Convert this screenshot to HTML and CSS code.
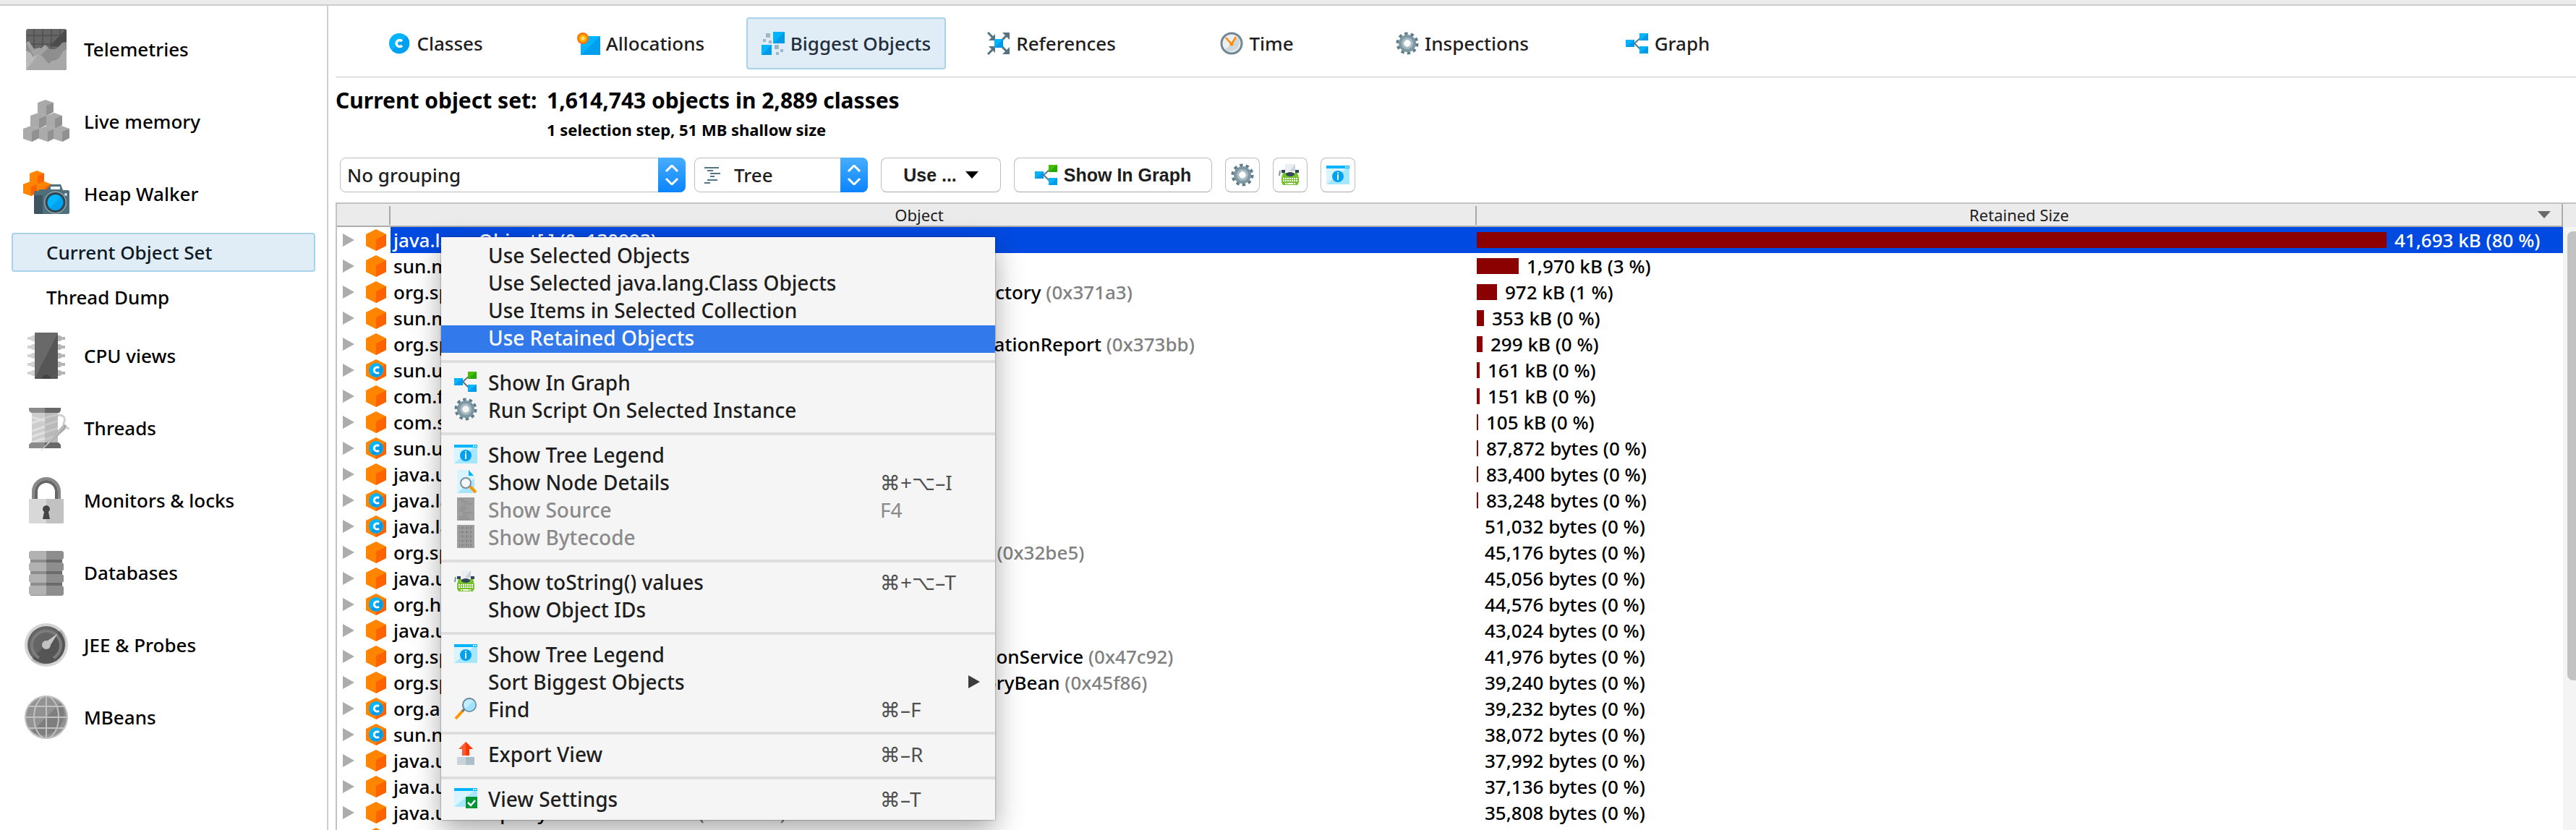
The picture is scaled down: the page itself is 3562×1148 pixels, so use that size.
FILE: index.html
```html
<!DOCTYPE html>
<html lang="en">
<head>
<meta charset="utf-8">
<title>Heap Walker - Biggest Objects</title>
<link rel="stylesheet" href="styles.css">
</head>
<body>
<svg class="sprite" aria-hidden="true">
  <symbol id="i-telemetry" viewBox="0 0 64 64">
    <clipPath id="tele-clip"><rect x="4" y="4" width="56" height="57" rx="3"/></clipPath>
    <g clip-path="url(#tele-clip)">
      <rect x="4" y="4" width="56" height="57" fill="#666"/>
      <path d="M60 4v24H36z" fill="#4a4a4a"/>
      <path d="M4 13h56M4 25h56M15 4v26M27 4v26M39 4v26M51 4v26" stroke="#505050" stroke-width="1.5"/>
      <path d="M4 23l4-2 7 11 7-2 3 1 5-5 7 6h7l5-3 5-6 6-1v39H4z" fill="#8e8e8e"/>
      <path d="M4 23l4-2 7 11 7-2 3 1 5-5 5 4-17 17z" fill="#a2a2a2"/>
      <path d="M4 34l6 3 4 6 7-4 6 3 8 10 5-4 5-1 5-3 5-9 5-3v31H4z" fill="#a8a8a8"/>
      <path d="M4 34l6 3 4 6 7-4-17 22z" fill="#bababa"/>
    </g>
  </symbol>
  <symbol id="i-cube" viewBox="0 0 22 22">
    <path d="M0 4L11 0l11 4v13l-10 5L0 18z" fill="currentColor"/>
    <path d="M12 8l10-4v13l-10 5z" fill="var(--shade)"/>
  </symbol>
  <symbol id="i-memory" viewBox="0 0 64 64">
    <g color="#aaaaaa" style="--shade:#919191">
      <use href="#i-cube" x="20" y="2" width="22" height="22"/>
      <use href="#i-cube" x="10" y="20" width="22" height="22"/>
      <use href="#i-cube" x="32" y="20" width="22" height="22"/>
      <use href="#i-cube" x="0" y="38" width="22" height="22"/>
      <use href="#i-cube" x="22" y="38" width="22" height="22"/>
      <use href="#i-cube" x="42" y="38" width="22" height="22"/>
    </g>
  </symbol>
  <symbol id="i-heap" viewBox="0 0 64 64">
    <g color="#ff8500" style="--shade:#ff6200">
      <use href="#i-cube" x="9" y="0" width="20" height="20"/>
      <use href="#i-cube" x="0" y="15" width="20" height="20"/>
      <use href="#i-cube" x="19" y="15" width="20" height="20"/>
    </g>
    <path d="M17 28h5v-2h10l4-4 2-3h14l3 8h7q2 0 2 2v29q0 2-2 2H17q-2 0-2-2V30q0-2 2-2z" fill="#4f6f7b"/>
    <path d="M15 34h12v26H17q-2 0-2-2z" fill="#3d5561"/>
    <rect x="38" y="22" width="13" height="4" fill="#eef3f5"/>
    <circle cx="44.500" cy="44" r="15.500" fill="#8ea3ab"/><circle cx="44.500" cy="44" r="14" fill="#33444e"/>
    <circle cx="44.500" cy="44" r="11" fill="#00a2f0"/><path d="M37 52a11 11 0 0 1 15-16z" fill="#00b7ff"/>
    <circle cx="59" cy="33" r="2" fill="#d3dde0"/>
  </symbol>
  <symbol id="i-cpu" viewBox="0 0 64 64">
    <g fill="#d2d2d2"><path id="pins" d="M6 6h4l3-2h3v8h-3l-3-2H6zM6 18h4l3-2h3v8h-3l-3-2H6zM6 30h4l3-2h3v8h-3l-3-2H6zM6 42h4l3-2h3v8h-3l-3-2H6zM6 54h4l3-2h3v8h-3l-3-2H6z"/></g>
    <path d="M58 6h-4l-3-2h-3v8h3l3-2h4zM58 18h-4l-3-2h-3v8h3l3-2h4zM58 30h-4l-3-2h-3v8h3l3-2h4zM58 42h-4l-3-2h-3v8h3l3-2h4zM58 54h-4l-3-2h-3v8h3l3-2h4z" fill="#b5b5b5"/>
    <rect x="16" width="32" height="64" rx="1" fill="#696969"/>
    <path d="M48 1v62l-1 1H17l-1-1z" fill="#565656"/>
    <path d="M26 64a6 6 0 0 1 12 0z" fill="#444"/>
  </symbol>
  <symbol id="i-thread" viewBox="0 0 64 64">
    <path d="M12 10h18v44H12z" fill="#cdcdcd"/><path d="M30 10h18v44H30z" fill="#b9b9b9"/>
    <path d="M12 17l18 5M12 25l18-6M12 36l18-6M12 44l18-6M12 52l18-6" stroke="#e0e0e0" stroke-width="3"/>
    <path d="M30 18l18-5M30 28l18-6M30 38l18-6M30 48l18-6" stroke="#c8c8c8" stroke-width="3"/>
    <path d="M8 4h22v7H11l-3-3zM8 60h22v-8H11l-3 3z" fill="#8b8b8b"/>
    <path d="M30 4h22v4l-2 3H30zM30 60h22v-5l-3-3H30z" fill="#686868"/>
    <path d="M48 14c7 0 11 3 9 9-2 4-2 7 7 10" fill="none" stroke="#d0d0d0" stroke-width="3"/>
    <path d="M24 64l30-35q6-4 6 1l-2 4z" fill="#aaa"/><path d="M24 64l32-34" stroke="#ddd"/>
  </symbol>
  <symbol id="i-lock" viewBox="0 0 64 64">
    <path d="M14 31V20a18 18 0 0 1 36 0v11" fill="none" stroke="#888" stroke-width="4"/>
    <path d="M18 31V20a14 14 0 0 1 28 0v11" fill="none" stroke="#666" stroke-width="4"/>
    <rect x="8" y="30" width="48" height="34" rx="1" fill="#d8d8d8"/>
    <path d="M32 30h23l1 1v32l-1 1H32z" fill="#c2c2c2"/>
    <path d="M27 58l2-10a5 5 0 1 1 6 0l2 10z" fill="#454545"/>
  </symbol>
  <symbol id="i-db" viewBox="0 0 64 64">
    <path d="M10 4h22v60H10z" fill="#8d8d8d"/><path d="M32 4h22v60H32z" fill="#6b6b6b"/>
    <g fill="#b2b2b2"><path d="M10 2h22v12H10l-2-2V4zM10 18h22v12H10l-2-2v-8zM10 34h22v12H10l-2-2v-8zM10 50h22v13H10l-2-2v-9z"/></g>
    <g fill="#8e8e8e"><path d="M32 2h22l2 2v8l-2 2H32zM32 18h22l2 2v8l-2 2H32zM32 34h22l2 2v8l-2 2H32zM32 50h22l2 2v10l-2 2H32z"/></g>
  </symbol>
  <symbol id="i-gauge" viewBox="0 0 64 64">
    <circle cx="32" cy="32" r="30" fill="#d4d4d4"/><path d="M53 11A30 30 0 0 1 11 53z" fill="#b5b5b5"/>
    <circle cx="32" cy="32" r="26" fill="#656565"/><path d="M50 13A26 26 0 0 1 13 50z" fill="#555"/>
    <path d="M22 50A20 20 0 1 1 42 50" fill="none" stroke="#7c7c7c" stroke-width="4"/>
    <path d="M48 16L36 35l-6-6z" fill="#c6c6c6"/><circle cx="32" cy="32" r="6" fill="#c2c2c2"/>
  </symbol>
  <symbol id="i-globe" viewBox="0 0 64 64">
    <circle cx="32" cy="32" r="29" fill="#929292"/><path d="M52 12A29 29 0 0 1 12 52z" fill="#7e7e7e"/>
    <g fill="none" stroke="#c0c0c0" stroke-width="2"><circle cx="32" cy="32" r="29"/><ellipse cx="32" cy="32" rx="17" ry="29"/><path d="M32 3v58M3 32h58M7 17h50M7 47h50"/></g>
  </symbol>

  <symbol id="i-class" viewBox="0 0 32 32">
    <circle cx="16" cy="16" r="14" fill="#00b4ff"/><path d="M26 6A14 14 0 0 1 6 26z" fill="#00a0f0"/>
    <path d="M20 13a4.500 4.500 0 1 0 0 6" fill="none" stroke="#fff" stroke-width="3.500"/>
  </symbol>
  <symbol id="i-alloc" viewBox="0 0 32 32">
    <path d="M5 6h27v26H5z" fill="#00b4ff"/><path d="M32 6v26H5z" fill="#009fee"/>
    <circle cx="8" cy="9" r="8" fill="#ff7200"/><circle cx="8" cy="9" r="5.500" fill="#ffb300"/><circle cx="8" cy="9" r="2.500" fill="#ffe17a"/>
  </symbol>
  <symbol id="i-biggest" viewBox="0 0 32 32">
    <path d="M16 0h16v16H16zM0 18h14v14H0z" fill="#00b4ff"/><path d="M32 0v16H16zM14 18v14H0z" fill="#009ae8"/>
    <path d="M6 2h6v6H6zM2 10h4v4H2zM10 12h4v4h-4zM18 18h6v6h-6zM26 24h4v4h-4zM20 28h4v4h-4z" fill="#9fb7c4"/>
  </symbol>
  <symbol id="i-refs" viewBox="0 0 32 32">
    <g fill="none" stroke="#54737f" stroke-width="3"><path d="M1 1l7 7M1 31l7-7M20 12l7-7M20 20l7 7"/></g>
    <path d="M11 3v9H2zM11 29v-9H2zM21 1h10v10zM21 31h10V21z" fill="#54737f"/>
    <path d="M10 10h12v12H10z" fill="#00b4ff"/><path d="M22 10v12H10z" fill="#009ae8"/>
  </symbol>
  <symbol id="i-clock" viewBox="0 0 32 32">
    <circle cx="16" cy="16" r="14" fill="#eceff1" stroke="#6f8894" stroke-width="3"/><path d="M25 7A13 13 0 0 1 7 25z" fill="#cdd7dc"/>
    <path d="M8 8l8 9 6-10" fill="none" stroke="#ff8a00" stroke-width="2.500"/><circle cx="16" cy="17" r="2.500" fill="#ff8a00"/>
  </symbol>
  <symbol id="i-gear" viewBox="0 0 32 32">
    <circle cx="16" cy="16" r="13" fill="none" stroke="#5e7c8a" stroke-width="5" stroke-dasharray="4.200 3.970"/>
    <circle cx="16" cy="16" r="8.500" fill="none" stroke="#7d97a3" stroke-width="7"/>
    <circle cx="16" cy="16" r="6.500" fill="none" stroke="#a9bbc3" stroke-width="3"/>
  </symbol>
  <symbol id="i-graph" viewBox="0 0 32 32">
    <path d="M22 7L12 16l10 10" fill="none" stroke="#5b7685" stroke-width="2"/>
    <path d="M0 11h12v10H0zM19 20h12v10H19z" fill="#00b4ff"/><path d="M12 11v10H0zM31 20v10H19z" fill="#009ae8"/>
    <path d="M19 2h12v10H19z" fill="var(--node, #00b4ff)"/><path d="M31 2v10H19z" fill="var(--node-dark, #009ae8)"/>
  </symbol>
  <symbol id="i-tree" viewBox="0 0 22 24">
    <path d="M0 1h20M4 5h8M8 9h14M8 13h6M4 18h14M0 22h8" stroke="#557484" stroke-width="2"/>
  </symbol>
  <symbol id="i-typewriter" viewBox="0 0 32 32">
    <path d="M9 1h14l0 10H9z" fill="#eceff1"/><path d="M23 1v10h-8z" fill="#c9d2d8"/>
    <path d="M4 9h5v4H4zM23 9h5v4h-5z" fill="#33475b"/><path d="M2 10l-1 7" stroke="#7c96a2" stroke-width="2"/>
    <path d="M6 13h20l2 7v6l-2 4H6l-2-4v-6z" fill="#76c22d"/>
    <ellipse cx="16" cy="15" rx="6" ry="3" fill="#33475b"/>
    <path d="M6 21h20M6 24h20" stroke="#fff" stroke-width="2" stroke-dasharray="2 1"/><path d="M9 28h2M12 28h8M21 28h2" stroke="#fff" stroke-width="2"/>
  </symbol>
  <symbol id="i-legend" viewBox="0 0 32 32">
    <path d="M0 3h32v26H0z" fill="#a6e6ff"/><path d="M0 3h32L0 29z" fill="#d8f4ff"/><path d="M0 3h32v4H0z" fill="#00b4ff"/>
    <path d="M26 4h2v2h-2zM29 4h2v2h-2z" fill="#d8f4ff"/>
    <circle cx="16" cy="18" r="8" fill="#00a2f0"/><path d="M15 12h2v2h-2zM15 15h2v8h-2z" fill="#fff"/>
  </symbol>
  <symbol id="i-details" viewBox="0 0 32 32">
    <path d="M4 0h16l8 8v24H4z" fill="#d8f4ff"/><path d="M28 12v20H4z" fill="#a6e6ff"/><path d="M20 0v8h7z" fill="#00b4ff"/>
    <path d="M22 23l8 8" stroke="#ff9500" stroke-width="4"/>
    <circle cx="16" cy="18" r="7" fill="#f4f6f7" stroke="#7f8f98" stroke-width="2"/>
  </symbol>
  <symbol id="i-source" viewBox="0 0 32 32">
    <path d="M4 0h24v32H4z" fill="#9e9e9e"/>
    <path d="M7 3h8M10 6h10M14 9h11M10 12h6M7 15h12M7 18h8M12 21h13M12 24h8M7 27h12M7 30h14" stroke="#868686"/>
  </symbol>
  <symbol id="i-bytecode" viewBox="0 0 32 32">
    <path d="M4 0h24v32H4z" fill="#9e9e9e"/>
    <path d="M7 4h18M7 10h18M7 16h18M7 22h18M7 28h18" stroke="#868686" stroke-width="4" stroke-dasharray="1 2 2 1"/>
  </symbol>
  <symbol id="i-find" viewBox="0 0 32 32">
    <path d="M2 30l11-12" stroke="#ff9500" stroke-width="4"/><path d="M11 20l4-4" stroke="#5f7d8c" stroke-width="3"/>
    <circle cx="21" cy="11" r="9" fill="#bfeeff" stroke="#66839a" stroke-width="2"/><path d="M27 5a8 8 0 0 1-12 12z" fill="#a0e2fb"/>
  </symbol>
  <symbol id="i-export" viewBox="0 0 32 32">
    <path d="M16 0l10 10h-5v9H11v-9H6z" fill="#ff5a30"/><path d="M16 0l10 10h-5v9h-5z" fill="#ff3700"/>
    <path d="M4 21h12v11H4z" fill="#c8d4d9"/><path d="M16 21h12v11H16z" fill="#abbfc6"/>
  </symbol>
  <symbol id="i-settings" viewBox="0 0 32 32">
    <path d="M0 2h32v26H0z" fill="#a6e6ff"/><path d="M0 2h32L0 28z" fill="#d8f4ff"/><path d="M0 2h32v4H0z" fill="#00b4ff"/>
    <path d="M26 3h2v2h-2zM29 3h2v2h-2z" fill="#d8f4ff"/>
    <path d="M16 14h16v16H16z" fill="#009636"/><path d="M19 22l4 4 6-7" fill="none" stroke="#fff" stroke-width="2.500"/>
  </symbol>
  <symbol id="i-obj" viewBox="0 0 28 30">
    <path d="M14 0l14 7v16l-14 7L0 23V7z" fill="#ff8500"/><path d="M28 7v16l-14 7V14z" fill="#ff6200"/>
  </symbol>
  <symbol id="i-cls" viewBox="0 0 28 30">
    <path d="M14 0l14 7v16l-14 7L0 23V7z" fill="#ff8500"/><path d="M28 7v16l-14 7V14z" fill="#ff6200"/>
    <circle cx="14" cy="15" r="10" fill="#00b4ff"/><path d="M21 8A10 10 0 0 1 7 22z" fill="#009ae8"/>
    <path d="M18 12a4 4 0 1 0 0 6" fill="none" stroke="#fff" stroke-width="3"/>
  </symbol>
  <symbol id="i-tri" viewBox="0 0 16 18"><path d="M0 0l16 9-16 9z" fill="currentColor"/></symbol>
  <symbol id="i-updown" viewBox="0 0 20 28"><path d="M2 9l8-8 8 8M2 19l8 8 8-8" fill="none" stroke="#fff" stroke-width="3"/></symbol>
  <symbol id="i-down" viewBox="0 0 18 10"><path d="M0 0h18l-9 10z" fill="currentColor"/></symbol>
</svg>

<div class="window">
  <div class="strip"></div>
  <div class="body">
    <nav class="sidebar">
      <a class="side-item" href="#"><svg class="side-icon"><use href="#i-telemetry"/></svg>Telemetries</a>
      <a class="side-item" href="#"><svg class="side-icon"><use href="#i-memory"/></svg>Live memory</a>
      <a class="side-item" href="#"><svg class="side-icon"><use href="#i-heap"/></svg>Heap Walker</a>
      <a class="side-sub is-active" href="#">Current Object Set</a>
      <a class="side-sub" href="#">Thread Dump</a>
      <a class="side-item" href="#"><svg class="side-icon"><use href="#i-cpu"/></svg>CPU views</a>
      <a class="side-item" href="#"><svg class="side-icon"><use href="#i-thread"/></svg>Threads</a>
      <a class="side-item" href="#"><svg class="side-icon"><use href="#i-lock"/></svg>Monitors &amp; locks</a>
      <a class="side-item" href="#"><svg class="side-icon"><use href="#i-db"/></svg>Databases</a>
      <a class="side-item" href="#"><svg class="side-icon"><use href="#i-gauge"/></svg>JEE &amp; Probes</a>
      <a class="side-item" href="#"><svg class="side-icon"><use href="#i-globe"/></svg>MBeans</a>
    </nav>

    <main class="main">
      <div class="tabs">
        <button class="tab"><svg class="icon"><use href="#i-class"/></svg>Classes</button>
        <button class="tab"><svg class="icon"><use href="#i-alloc"/></svg>Allocations</button>
        <button class="tab is-active"><svg class="icon"><use href="#i-biggest"/></svg>Biggest Objects</button>
        <button class="tab"><svg class="icon"><use href="#i-refs"/></svg>References</button>
        <button class="tab"><svg class="icon"><use href="#i-clock"/></svg>Time</button>
        <button class="tab"><svg class="icon"><use href="#i-gear"/></svg>Inspections</button>
        <button class="tab"><svg class="icon"><use href="#i-graph"/></svg>Graph</button>
      </div>

      <dl class="summary">
        <dt>Current object set:</dt>
        <dd>1,614,743 objects in 2,889 classes</dd>
        <dd class="summary-note">1 selection step, 51 MB shallow size</dd>
      </dl>

      <div class="toolbar">
        <div class="selects">
          <div class="combo combo-wide">
            <select aria-label="Grouping"><option>No grouping</option></select>
            <span class="combo-cap"><svg class="updown"><use href="#i-updown"/></svg></span>
          </div>
          <div class="combo combo-icon">
            <select aria-label="View mode"><option>Tree</option></select>
            <svg class="combo-glyph"><use href="#i-tree"/></svg>
            <span class="combo-cap"><svg class="updown"><use href="#i-updown"/></svg></span>
          </div>
        </div>
        <button class="btn btn-use">Use ...<svg class="down"><use href="#i-down"/></svg></button>
        <button class="btn btn-graph"><svg class="icon green"><use href="#i-graph"/></svg>Show In Graph</button>
        <button class="btn btn-square" aria-label="Run script"><svg class="icon"><use href="#i-gear"/></svg></button>
        <button class="btn btn-square" aria-label="Show toString() values"><svg class="icon"><use href="#i-typewriter"/></svg></button>
        <button class="btn btn-square" aria-label="Show tree legend"><svg class="icon"><use href="#i-legend"/></svg></button>
      </div>

      <div class="grid-area">
        <div class="grid-scroll">
        <table class="grid">
          <thead>
            <tr><th class="col-tree"></th><th class="col-object">Object</th><th class="col-size"><div class="th-size"><span>Retained Size</span><svg class="down"><use href="#i-down"/></svg></div></th></tr>
          </thead>
          <tbody>
            <tr class="is-selected"><td><div class="node"><svg class="tri"><use href="#i-tri"/></svg><svg class="hex"><use href="#i-obj"/></svg></div></td><td>java.lang.Object[ ] <span class="id">(0x130993)</span></td><td><div class="size"><i style="width:1258px"></i>41,693 kB (80 %)</div></td></tr>
            <tr><td><div class="node"><svg class="tri"><use href="#i-tri"/></svg><svg class="hex"><use href="#i-obj"/></svg></div></td><td>sun.misc.URLClassPath</td><td><div class="size"><i style="width:58px"></i>1,970 kB (3 %)</div></td></tr>
            <tr><td><div class="node"><svg class="tri"><use href="#i-tri"/></svg><svg class="hex"><use href="#i-obj"/></svg></div></td><td>org.springframework.beans.factory.support.DefaultListableBeanFactory <span class="id">(0x371a3)</span></td><td><div class="size"><i style="width:28px"></i>972 kB (1 %)</div></td></tr>
            <tr><td><div class="node"><svg class="tri"><use href="#i-tri"/></svg><svg class="hex"><use href="#i-obj"/></svg></div></td><td>sun.misc.Launcher</td><td><div class="size"><i style="width:10px"></i>353 kB (0 %)</div></td></tr>
            <tr><td><div class="node"><svg class="tri"><use href="#i-tri"/></svg><svg class="hex"><use href="#i-obj"/></svg></div></td><td>org.springframework.boot.autoconfigure.condition.ConditionEvaluationReport <span class="id">(0x373bb)</span></td><td><div class="size"><i style="width:8px"></i>299 kB (0 %)</div></td></tr>
            <tr><td><div class="node"><svg class="tri"><use href="#i-tri"/></svg><svg class="hex"><use href="#i-cls"/></svg></div></td><td>sun.util.calendar.ZoneInfo</td><td><div class="size"><i style="width:4px"></i>161 kB (0 %)</div></td></tr>
            <tr><td><div class="node"><svg class="tri"><use href="#i-tri"/></svg><svg class="hex"><use href="#i-obj"/></svg></div></td><td>com.fasterxml.jackson</td><td><div class="size"><i style="width:4px"></i>151 kB (0 %)</div></td></tr>
            <tr><td><div class="node"><svg class="tri"><use href="#i-tri"/></svg><svg class="hex"><use href="#i-obj"/></svg></div></td><td>com.sun.jmx.mbeanserver</td><td><div class="size"><i style="width:2px"></i>105 kB (0 %)</div></td></tr>
            <tr><td><div class="node"><svg class="tri"><use href="#i-tri"/></svg><svg class="hex"><use href="#i-cls"/></svg></div></td><td>sun.util.locale</td><td><div class="size"><i style="width:2px"></i>87,872 bytes (0 %)</div></td></tr>
            <tr><td><div class="node"><svg class="tri"><use href="#i-tri"/></svg><svg class="hex"><use href="#i-obj"/></svg></div></td><td>java.util.HashMap</td><td><div class="size"><i style="width:2px"></i>83,400 bytes (0 %)</div></td></tr>
            <tr><td><div class="node"><svg class="tri"><use href="#i-tri"/></svg><svg class="hex"><use href="#i-cls"/></svg></div></td><td>java.lang.Character</td><td><div class="size"><i style="width:2px"></i>83,248 bytes (0 %)</div></td></tr>
            <tr><td><div class="node"><svg class="tri"><use href="#i-tri"/></svg><svg class="hex"><use href="#i-cls"/></svg></div></td><td>java.lang.Integer</td><td><div class="size"><i style="width:0px"></i>51,032 bytes (0 %)</div></td></tr>
            <tr><td><div class="node"><svg class="tri"><use href="#i-tri"/></svg><svg class="hex"><use href="#i-obj"/></svg></div></td><td>org.springframework.util.ConcurrentReferenceHashMap$Segment <span class="id">(0x32be5)</span></td><td><div class="size"><i style="width:0px"></i>45,176 bytes (0 %)</div></td></tr>
            <tr><td><div class="node"><svg class="tri"><use href="#i-tri"/></svg><svg class="hex"><use href="#i-obj"/></svg></div></td><td>java.util.HashMap</td><td><div class="size"><i style="width:0px"></i>45,056 bytes (0 %)</div></td></tr>
            <tr><td><div class="node"><svg class="tri"><use href="#i-tri"/></svg><svg class="hex"><use href="#i-cls"/></svg></div></td><td>org.hibernate.cfg</td><td><div class="size"><i style="width:0px"></i>44,576 bytes (0 %)</div></td></tr>
            <tr><td><div class="node"><svg class="tri"><use href="#i-tri"/></svg><svg class="hex"><use href="#i-obj"/></svg></div></td><td>java.util.HashMap</td><td><div class="size"><i style="width:0px"></i>43,024 bytes (0 %)</div></td></tr>
            <tr><td><div class="node"><svg class="tri"><use href="#i-tri"/></svg><svg class="hex"><use href="#i-obj"/></svg></div></td><td>org.springframework.boot.autoconfigure.web.format.WebConversionService <span class="id">(0x47c92)</span></td><td><div class="size"><i style="width:0px"></i>41,976 bytes (0 %)</div></td></tr>
            <tr><td><div class="node"><svg class="tri"><use href="#i-tri"/></svg><svg class="hex"><use href="#i-obj"/></svg></div></td><td>org.springframework.cache.jpa.LocalContainerEntityManagerFactoryBean <span class="id">(0x45f86)</span></td><td><div class="size"><i style="width:0px"></i>39,240 bytes (0 %)</div></td></tr>
            <tr><td><div class="node"><svg class="tri"><use href="#i-tri"/></svg><svg class="hex"><use href="#i-cls"/></svg></div></td><td>org.apache.catalina</td><td><div class="size"><i style="width:0px"></i>39,232 bytes (0 %)</div></td></tr>
            <tr><td><div class="node"><svg class="tri"><use href="#i-tri"/></svg><svg class="hex"><use href="#i-cls"/></svg></div></td><td>sun.nio.cs.ext</td><td><div class="size"><i style="width:0px"></i>38,072 bytes (0 %)</div></td></tr>
            <tr><td><div class="node"><svg class="tri"><use href="#i-tri"/></svg><svg class="hex"><use href="#i-obj"/></svg></div></td><td>java.util.HashMap</td><td><div class="size"><i style="width:0px"></i>37,992 bytes (0 %)</div></td></tr>
            <tr><td><div class="node"><svg class="tri"><use href="#i-tri"/></svg><svg class="hex"><use href="#i-obj"/></svg></div></td><td>java.util.HashMap</td><td><div class="size"><i style="width:0px"></i>37,136 bytes (0 %)</div></td></tr>
            <tr><td><div class="node"><svg class="tri"><use href="#i-tri"/></svg><svg class="hex"><use href="#i-obj"/></svg></div></td><td>java.util.PropertyResourceBundle <span class="id">(0x2ab7e)</span></td><td><div class="size"><i style="width:0px"></i>35,808 bytes (0 %)</div></td></tr>
            <tr><td><div class="node"><svg class="tri"><use href="#i-tri"/></svg><svg class="hex"><use href="#i-obj"/></svg></div></td><td></td><td></td></tr>
          </tbody>
        </table>
        </div>
        <div class="scroll-col"><div class="scroll-head"></div><div class="scroll-track"><div class="scroll-thumb"></div></div></div>
      </div>
    </main>
  </div>
</div>

<div class="menu" role="menu">
  <button role="menuitem"><span></span><span>Use Selected Objects</span></button>
  <button role="menuitem"><span></span><span>Use Selected java.lang.Class Objects</span></button>
  <button role="menuitem"><span></span><span>Use Items in Selected Collection</span></button>
  <button role="menuitem" class="is-hover"><span></span><span>Use Retained Objects</span></button>
  <hr>
  <button role="menuitem"><svg class="icon green"><use href="#i-graph"/></svg><span>Show In Graph</span></button>
  <button role="menuitem"><svg class="icon"><use href="#i-gear"/></svg><span>Run Script On Selected Instance</span></button>
  <hr>
  <button role="menuitem"><svg class="icon"><use href="#i-legend"/></svg><span>Show Tree Legend</span></button>
  <button role="menuitem"><svg class="icon"><use href="#i-details"/></svg><span>Show Node Details</span><kbd>⌘+⌥–I</kbd></button>
  <button role="menuitem" disabled><svg class="icon"><use href="#i-source"/></svg><span>Show Source</span><kbd>F4</kbd></button>
  <button role="menuitem" disabled><svg class="icon"><use href="#i-bytecode"/></svg><span>Show Bytecode</span></button>
  <hr>
  <button role="menuitem"><svg class="icon"><use href="#i-typewriter"/></svg><span>Show toString() values</span><kbd>⌘+⌥–T</kbd></button>
  <button role="menuitem"><span></span><span>Show Object IDs</span></button>
  <hr>
  <button role="menuitem"><svg class="icon"><use href="#i-legend"/></svg><span>Show Tree Legend</span></button>
  <button role="menuitem"><span></span><span>Sort Biggest Objects</span><svg class="submenu"><use href="#i-tri"/></svg></button>
  <button role="menuitem"><svg class="icon"><use href="#i-find"/></svg><span>Find</span><kbd>⌘–F</kbd></button>
  <hr>
  <button role="menuitem"><svg class="icon"><use href="#i-export"/></svg><span>Export View</span><kbd>⌘–R</kbd></button>
  <hr>
  <button role="menuitem"><svg class="icon"><use href="#i-settings"/></svg><span>View Settings</span><kbd>⌘–T</kbd></button>
</div>
</body>
</html>
```
FILE: styles.css
```css
* { box-sizing: border-box; }

body {
  margin: 0;
  background: #fff;
  color: #000;
  font: 500 26px/36px "Noto Sans", "Open Sans", "DejaVu Sans", sans-serif;
}

button, select { font: inherit; color: inherit; }
a { color: inherit; text-decoration: none; }
svg { display: block; flex: none; }
.sprite { position: absolute; width: 0; height: 0; }

.window {
  display: flex;
  flex-direction: column;
  height: 100vh;
  overflow: hidden;
}

.strip {
  flex: none;
  height: 8px;
  background: #ececec;
  border-bottom: 2px solid #cdcdcd;
}

.body { display: flex; flex: 1; min-height: 0; }

/* Sidebar */
.sidebar {
  flex: none;
  width: 454px;
  padding-top: 10px;
  border-right: 2px solid #cfcfcf;
}

.side-item {
  display: flex;
  align-items: center;
  gap: 20px;
  height: 100px;
  padding-left: 32px;
}

.side-icon { width: 64px; height: 64px; }

.side-sub {
  display: flex;
  align-items: center;
  height: 54px;
  margin: 4px 16px 8px;
  padding-left: 46px;
  border: 2px solid transparent;
  border-radius: 4px;
}

.side-sub + .side-sub { margin-bottom: 4px; }

.side-sub.is-active {
  background: #e0ecf6;
  border-color: #a9d3e9;
  color: #0e1b26;
}

/* Main column */
.main {
  display: flex;
  flex: 1;
  flex-direction: column;
  min-width: 0;
  padding-left: 10px;
}

.tabs {
  display: flex;
  gap: 8px;
  padding: 16px 0 10px;
  border-bottom: 1px solid #c8c8c8;
  color: #1e1e1e;
}

.tab {
  display: flex;
  align-items: center;
  justify-content: center;
  gap: 8px;
  width: 276px;
  height: 72px;
  padding: 0;
  background: none;
  border: 2px solid transparent;
  border-radius: 4px;
}

.tab.is-active {
  background: #e0ecf6;
  border-color: #a9d3e9;
  color: #1f2e3a;
}

.icon { width: 32px; height: 32px; }
.green { --node: #45be00; --node-dark: #2ba800; }

.summary {
  display: grid;
  grid-template-columns: 292px 1fr;
  margin: 12px 0 19px;
  font-size: 30px;
  font-weight: 700;
  line-height: 40px;
}

.summary dd { margin: 0; }
.summary .summary-note { grid-column: 2; font-size: 22px; }

/* Toolbar */
.toolbar {
  display: flex;
  gap: 18px;
  padding: 0 0 14px 6px;
  color: #1e1e1e;
}

.selects { display: flex; gap: 12px; }

.combo { position: relative; width: 240px; height: 48px; }
.combo-wide { width: 478px; }

.combo select {
  width: 100%;
  height: 100%;
  padding: 0 40px 0 9px;
  appearance: none;
  background: #fff;
  border: 1px solid #bdbdbd;
  border-radius: 8px;
}

.combo-icon select { padding-left: 54px; }

.combo-glyph {
  position: absolute;
  top: 13px;
  left: 14px;
  width: 22px;
  height: 24px;
}

.combo-cap {
  position: absolute;
  top: 0;
  right: 0;
  bottom: 0;
  display: grid;
  place-items: center;
  width: 38px;
  border-radius: 0 8px 8px 0;
  background: linear-gradient(#47adff, #0a84ff);
  pointer-events: none;
}

.updown { width: 20px; height: 28px; }

.btn {
  display: flex;
  align-items: center;
  justify-content: center;
  height: 48px;
  padding: 0;
  background: #fff;
  border: 1px solid #bdbdbd;
  border-bottom-color: #a8a8a8;
  border-radius: 8px;
  font-family: "Liberation Sans", Arial, sans-serif;
  font-size: 25px;
  font-weight: 700;
}

.btn-use { width: 166px; gap: 12px; }
.btn-graph { width: 274px; gap: 8px; }
.btn-square { width: 48px; }
.down { width: 18px; height: 10px; }
.btn-use .down { color: #000; }

/* Object table */
.grid-area {
  display: flex;
  flex: 1;
  min-height: 0;
  border-top: 2px solid #c2c2c2;
  border-left: 2px solid #c2c2c2;
}

.grid-scroll { flex: 1; min-width: 0; overflow: hidden; }

.grid {
  width: 100%;
  table-layout: fixed;
  border-collapse: separate;
  border-spacing: 0;
}

.grid th {
  height: 32px;
  padding: 0;
  background: linear-gradient(#a8a8a8, #a8a8a8) right 3px / 2px 26px no-repeat #ebebeb;
  border-bottom: 2px solid #acacac;
  color: #1e1e1e;
  font-size: 22px;
  font-weight: 400;
  line-height: 30px;
}

.grid th.col-tree { width: 74px; }
.grid th.col-object { padding-right: 40px; }
.grid th.col-size { background: #ebebeb; border-right: 2px solid #acacac; }

.th-size { display: flex; align-items: center; color: #6a6a6a; padding-right: 15px; }
.th-size span { flex: 1; padding-left: 33px; color: #1e1e1e; }

.grid td { height: 36px; padding: 0; white-space: nowrap; overflow: hidden; }
.grid td + td { padding-left: 4px; }
.grid td:last-child { padding-left: 0; }

.node { display: flex; align-items: center; gap: 16px; padding-left: 8px; }
.tri { width: 16px; height: 18px; color: #acacac; }
.hex { width: 28px; height: 30px; }

.id { color: #808080; }

.size { display: flex; align-items: center; gap: 11px; }
.size i { height: 22px; background: #8b0000; }

.is-selected td + td { background: #004ae2; color: #fff; }
.is-selected .id { color: #fff; }

.scroll-col { display: flex; flex-direction: column; flex: none; width: 18px; }
.scroll-head { height: 32px; background: #ebebeb; }
.scroll-track { flex: 1; padding: 6px 0 0 6px; background: #f4f4f4; }
.scroll-thumb { height: 75%; background: #c2c2c2; border-radius: 8px 0 0 8px; }

/* Context menu */
.menu {
  position: absolute;
  top: 328px;
  left: 610px;
  width: 766px;
  padding: 8px 0;
  background: #f5f5f5;
  box-shadow: 0 0 2px rgba(0, 0, 0, .5), 0 14px 36px rgba(0, 0, 0, .34);
  color: #1e1e1e;
  font-size: 28px;
  line-height: 34px;
}

.menu button {
  display: grid;
  grid-template-columns: 32px 1fr 138px;
  width: 100%;
  height: 38px;
  padding: 0 21px 4px 18px;
  background: none;
  border: 0;
  text-align: left;
}

.menu button > :nth-child(2) { padding-left: 15px; }
.menu button.is-hover { background: #3279ec; color: #fff; }
.menu button:disabled, .menu button:disabled kbd { color: #8a8a8a; }
.menu kbd { color: #505050; font: inherit; font-weight: 400; }

.menu hr {
  height: 4px;
  margin: 10px 0;
  border: 0;
  background: #dedede;
}

.submenu {
  justify-self: end;
  align-self: center;
  width: 16px;
  height: 18px;
  color: #3c3c3c;
}
```
